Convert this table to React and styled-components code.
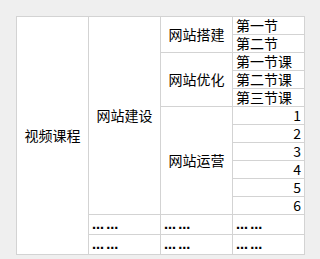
import React from 'react';
import styled, { createGlobalStyle } from 'styled-components';

const GlobalStyle = createGlobalStyle`
  html, body {
    margin: 0;
    padding: 0;
    background: #efefef;
  }
`;

const Page = styled.div`
  padding: 16px 0 0 16px;
`;

const CourseTable = styled.table`
  border-collapse: collapse;
  table-layout: fixed;
  width: 289px;
  background: #fff;
  font-family: "Noto Sans CJK SC", "Liberation Sans", sans-serif;
  font-size: 14px;
  color: #000;
`;

const Cell = styled.td`
  border: 1px solid #d3d3d3;
  height: 17px;
  line-height: 17px;
  padding: 0 3px;
  white-space: nowrap;
  overflow: hidden;
  text-align: ${props => props.align || 'left'};
  vertical-align: middle;
`;

const Dots = styled.span`
  font-family: "DejaVu Sans", sans-serif;
  font-size: 12px;
  font-weight: bold;
  letter-spacing: -1px;
`;

const more = <Dots>… …</Dots>;

export default function App() {
  return (
    <Page>
      <GlobalStyle />
      <CourseTable>
        <colgroup>
          <col style={{ width: 72 }} />
          <col style={{ width: 72 }} />
          <col style={{ width: 72 }} />
          <col style={{ width: 72 }} />
        </colgroup>
        <tbody>
          <tr>
            <Cell rowSpan={13} align="center">视频课程</Cell>
            <Cell rowSpan={11} align="center">网站建设</Cell>
            <Cell rowSpan={2} align="center">网站搭建</Cell>
            <Cell>第一节</Cell>
          </tr>
          <tr><Cell>第二节</Cell></tr>
          <tr>
            <Cell rowSpan={3} align="center">网站优化</Cell>
            <Cell>第一节课</Cell>
          </tr>
          <tr><Cell>第二节课</Cell></tr>
          <tr><Cell>第三节课</Cell></tr>
          <tr>
            <Cell rowSpan={6} align="center">网站运营</Cell>
            <Cell align="right">1</Cell>
          </tr>
          <tr><Cell align="right">2</Cell></tr>
          <tr><Cell align="right">3</Cell></tr>
          <tr><Cell align="right">4</Cell></tr>
          <tr><Cell align="right">5</Cell></tr>
          <tr><Cell align="right">6</Cell></tr>
          <tr>
            <Cell>{more}</Cell>
            <Cell>{more}</Cell>
            <Cell>{more}</Cell>
          </tr>
          <tr>
            <Cell>{more}</Cell>
            <Cell>{more}</Cell>
            <Cell>{more}</Cell>
          </tr>
        </tbody>
      </CourseTable>
    </Page>
  );
}
